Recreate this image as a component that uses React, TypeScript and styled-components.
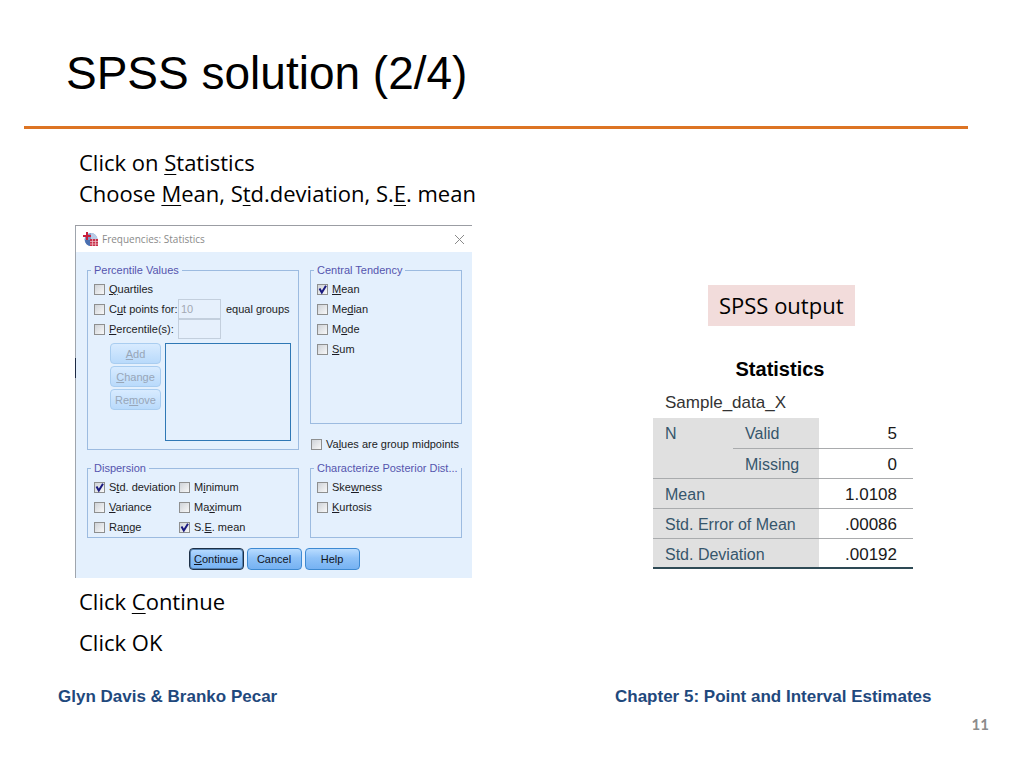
import React from "react";
import styled, { createGlobalStyle } from "styled-components";

const GlobalStyle = createGlobalStyle`
  *, *::before, *::after { box-sizing: border-box; }
  body {
    margin: 0;
    background: #fff;
    color: #000;
    font-family: "Liberation Sans", Arial, sans-serif;
  }
  u { text-decoration-thickness: 1px; }
`;

const Slide = styled.main`
  min-height: 100vh;
  display: flex;
  flex-direction: column;
`;

const Title = styled.h1`
  margin: 0 56px 0 24px;
  padding: 47px 42px 26px;
  font-size: 46px;
  line-height: 53px;
  font-weight: 400;
  border-bottom: 3px solid #dd7423;
`;

const Columns = styled.div`
  display: grid;
  grid-template-columns: minmax(0, 548fr) minmax(0, 476fr);
  padding-top: 18px;
`;

const Steps = styled.section`
  padding-left: 75px;
`;

const Step = styled.p`
  margin: 0;
  padding-left: 4px;
  font-family: "Open Sans", "Noto Sans", Calibri, sans-serif;
  font-size: 22px;
  line-height: 31px;
  u { text-underline-offset: 3px; }
`;

const AfterSteps = styled.div`
  padding-top: 8px;
  display: flex;
  flex-direction: column;
  gap: 10px;
`;

const Dialog = styled.section`
  width: 397px;
  margin-top: 16px;
  padding-left: 1px;
  border-top: 1px solid #9b9da3;
  background:
    linear-gradient(#9fa5ad 132px, #1d2a44 132px, #1d2a44 152px, #9fa5ad 152px)
      left / 1px 100% no-repeat,
    #e4f0fd;
  font-size: 11px;
  line-height: 14px;
  color: #1c1c24;
`;

const TitleBar = styled.header`
  display: flex;
  align-items: center;
  height: 26px;
  padding: 0 7px;
  gap: 4px;
  background: #fff;
  color: #8a8a8a;
`;

const DialogTitle = styled.h2`
  flex: 1;
  margin: 0;
  font-family: "Open Sans", "Noto Sans", sans-serif;
  font-size: 10px;
  font-weight: 400;
`;

const CloseButton = styled.button`
  display: flex;
  padding: 0;
  border: 0;
  background: none;
  color: #8a8a8a;
`;

const Panels = styled.div`
  display: grid;
  grid-template-columns: 212px 152px;
  column-gap: 11px;
  padding: 11px 10px 0 11px;
`;

const PanelColumn = styled.div`
  display: flex;
  flex-direction: column;
`;

const Group = styled.fieldset<{ $height: number }>`
  display: flex;
  flex-direction: column;
  height: ${(p) => p.$height}px;
  min-width: 0;
  margin: 0;
  padding: 2px 5px 0 6px;
  border: 1px solid #9cbbe0;
`;

const LowerGroup = styled(Group)`
  margin-top: 11px;
`;

const Legend = styled.legend`
  margin-left: -3px;
  padding: 0 3px;
  color: #5555ae;
  white-space: nowrap;
`;

const Row = styled.div`
  display: flex;
  align-items: center;
  height: 20px;
`;

const CheckLabel = styled.label<{ $width?: number }>`
  display: flex;
  align-items: center;
  gap: 4px;
  height: 20px;
  width: ${(p) => (p.$width ? `${p.$width}px` : "auto")};
  white-space: nowrap;
`;

const Box = styled.input`
  appearance: none;
  flex: none;
  width: 11px;
  height: 11px;
  margin: 0;
  border: 1px solid #8e8f8f;
  background: linear-gradient(135deg, #cfd3d8, #f8f8f8);
`;

const BoxWrap = styled.span`
  display: grid;
  flex: none;
  > * { grid-area: 1 / 1; }
  svg { pointer-events: none; }
`;

const Field = styled.input`
  width: 43px;
  height: 20px;
  margin: 0;
  padding: 0 2px;
  border: 1px solid #c3cfdd;
  background: #e6f0fc;
  color: #a3a9b3;
  font: inherit;
`;

const EqualGroups = styled.span`
  margin-left: 5px;
  white-space: nowrap;
`;

const Midpoints = styled.div`
  padding: 10px 0 7px 1px;
`;

const ListArea = styled.div`
  display: flex;
  gap: 4px;
  padding: 4px 2px 0 16px;
`;

const ButtonStack = styled.div`
  display: flex;
  flex-direction: column;
  gap: 2px;
`;

const PushButton = styled.button<{ $primary?: boolean }>`
  width: ${(p) => (p.disabled ? 51 : 55)}px;
  height: ${(p) => (p.disabled ? 21 : 22)}px;
  padding: 0;
  border: 1px solid ${(p) => (p.disabled ? "#a9cdf0" : p.$primary ? "#1d3047" : "#3e8ad2")};
  border-radius: 4px;
  box-shadow: ${(p) => (p.$primary ? "inset 0 0 0 1px #5481b0" : "none")};
  background: ${(p) =>
    p.disabled
      ? "linear-gradient(#d8ebff, #b9dafb)"
      : "linear-gradient(#b9dcff, #8fc2f8 45%, #76b2f2)"};
  color: ${(p) => (p.disabled ? "#98a6b8" : "#10141c")};
  font: inherit;
`;

const ListBox = styled.select`
  appearance: none;
  flex: 1;
  height: 98px;
  margin: 0;
  border: 1px solid #2f78b5;
  border-radius: 0;
  background: #e4f0fd;
`;

const Actions = styled.footer`
  display: flex;
  justify-content: center;
  gap: 3px;
  padding: 10px 0 8px;
`;

const Output = styled.section`
  display: flex;
  flex-direction: column;
  align-items: flex-start;
  padding: 138px 0 0 105px;
`;

const OutputTag = styled.p`
  margin: 0 0 0 55px;
  padding: 5px 11px;
  background: #f2dcdb;
  font-family: "Open Sans", "Noto Sans", Calibri, sans-serif;
  font-size: 22px;
  line-height: 31px;
`;

const StatsTable = styled.table`
  width: 260px;
  margin-top: 28px;
  border-collapse: collapse;
  table-layout: fixed;
`;

const StatsCaption = styled.caption`
  text-align: center;
  font-size: 17px;
  line-height: 30px;
  color: #333;
  strong {
    display: block;
    margin-left: -6px;
    color: #000;
    font-size: 20px;
    line-height: 30px;
  }
  span {
    display: block;
    padding: 4px 0 0 12px;
    text-align: left;
  }
`;

const StatsRow = styled.tr`
  height: 30px;
  &:last-child > * { border-bottom: 2px solid #2e4a55; }
`;

const HeadCell = styled.th`
  padding: 7px 0 0 12px;
  border-bottom: 1px solid #a9abad;
  background: #e0e0e0;
  color: #36566c;
  font-size: 16px;
  line-height: 18px;
  font-weight: 400;
  text-align: left;
  vertical-align: top;
`;

const ValueCell = styled.td`
  padding: 7px 16px 0 0;
  border-bottom: 1px solid #a9abad;
  color: #1a1a1a;
  font-size: 17px;
  line-height: 18px;
  text-align: right;
  vertical-align: top;
`;

const SlideFooter = styled.footer`
  display: grid;
  grid-template-columns: minmax(0, 557fr) minmax(0, 409fr);
  padding: 27px 0 0 58px;
  color: #1f497d;
  font-size: 17px;
  line-height: 24px;
  font-weight: 700;
`;

const PageNumber = styled.p`
  margin: 0;
  padding: 3px 35px 0 0;
  text-align: right;
  color: #8c8c8c;
  font-family: Lato, Carlito, Calibri, sans-serif;
  font-size: 15px;
  line-height: 24px;
  font-weight: 700;
`;

function Check({ children, checked, width }: { children: React.ReactNode; checked?: boolean; width?: number }) {
  return (
    <CheckLabel $width={width}>
      <BoxWrap>
        <Box type="checkbox" defaultChecked={checked} />
        {checked && (
          <svg width="11" height="11" viewBox="0 0 11 11" aria-hidden="true">
            <path d="M2.500 4.500 L4.800 8.500 L9 1.800" fill="none" stroke="#1a1a80" strokeWidth="2" />
          </svg>
        )}
      </BoxWrap>
      <span>{children}</span>
    </CheckLabel>
  );
}

function AppIcon() {
  return (
    <svg width="15" height="15" viewBox="0 0 15 15" aria-hidden="true">
      <circle cx="8" cy="7.500" r="6.500" fill="#7d9bcb" />
      <path d="M8 1a6.500 6.500 0 0 1 6.500 6.500H8z" fill="#b9cbe6" />
      <path d="M2 8a6.500 6.500 0 0 0 5 6V8z" fill="#4a6fb0" />
      <path d="M4 0v8M0 4h8" stroke="#c8203c" strokeWidth="2" />
      <rect x="7" y="7" width="8" height="7" fill="#c8304a" />
      <path d="M7 9.500h8M7 12h8M9.500 7v7M12.500 7v7" stroke="#f0c4cc" strokeWidth="0.7" />
    </svg>
  );
}

export default function App() {
  return (
    <>
      <GlobalStyle />
      <Slide>
        <Title>SPSS solution (2/4)</Title>
        <Columns>
          <Steps>
            <Step>Click on <u>S</u>tatistics</Step>
            <Step>Choose <u>M</u>ean, S<u>t</u>d.deviation, S.<u>E</u>. mean</Step>
            <Dialog aria-label="Frequencies: Statistics">
              <TitleBar>
                <AppIcon />
                <DialogTitle>Frequencies: Statistics</DialogTitle>
                <CloseButton aria-label="Close">
                  <svg width="11" height="11" viewBox="0 0 11 11" aria-hidden="true">
                    <path d="M1 1 L10 10 M10 1 L1 10" stroke="currentColor" />
                  </svg>
                </CloseButton>
              </TitleBar>
              <Panels>
                <PanelColumn>
                  <Group $height={187}>
                    <Legend>Percentile Values</Legend>
                    <Row><Check><u>Q</u>uartiles</Check></Row>
                    <Row>
                      <Check width={84}>C<u>u</u>t points for:</Check>
                      <Field aria-label="Number of equal groups" defaultValue="10" disabled />
                      <EqualGroups>equal groups</EqualGroups>
                    </Row>
                    <Row>
                      <Check width={84}><u>P</u>ercentile(s):</Check>
                      <Field aria-label="Percentile" disabled />
                    </Row>
                    <ListArea>
                      <ButtonStack>
                        <PushButton disabled><u>A</u>dd</PushButton>
                        <PushButton disabled><u>C</u>hange</PushButton>
                        <PushButton disabled>Re<u>m</u>ove</PushButton>
                      </ButtonStack>
                      <ListBox size={5} aria-label="Percentile list" />
                    </ListArea>
                  </Group>
                  <LowerGroup $height={77}>
                    <Legend>Dispersion</Legend>
                    <Row>
                      <Check checked width={85}>S<u>t</u>d. deviation</Check>
                      <Check>M<u>i</u>nimum</Check>
                    </Row>
                    <Row>
                      <Check width={85}><u>V</u>ariance</Check>
                      <Check>Ma<u>x</u>imum</Check>
                    </Row>
                    <Row>
                      <Check width={85}>Ra<u>n</u>ge</Check>
                      <Check checked>S.<u>E</u>. mean</Check>
                    </Row>
                  </LowerGroup>
                </PanelColumn>
                <PanelColumn>
                  <Group $height={161}>
                    <Legend>Central Tendency</Legend>
                    <Row><Check checked><u>M</u>ean</Check></Row>
                    <Row><Check>Me<u>d</u>ian</Check></Row>
                    <Row><Check>M<u>o</u>de</Check></Row>
                    <Row><Check><u>S</u>um</Check></Row>
                  </Group>
                  <Midpoints>
                    <Check>Va<u>l</u>ues are group midpoints</Check>
                  </Midpoints>
                  <Group $height={77}>
                    <Legend>Characterize Posterior Dist...</Legend>
                    <Row><Check>Ske<u>w</u>ness</Check></Row>
                    <Row><Check><u>K</u>urtosis</Check></Row>
                  </Group>
                </PanelColumn>
              </Panels>
              <Actions>
                <PushButton $primary><u>C</u>ontinue</PushButton>
                <PushButton>Cancel</PushButton>
                <PushButton>Help</PushButton>
              </Actions>
            </Dialog>
            <AfterSteps>
              <Step>Click <u>C</u>ontinue</Step>
              <Step>Click OK</Step>
            </AfterSteps>
          </Steps>
          <Output>
            <OutputTag>SPSS output</OutputTag>
            <StatsTable>
              <StatsCaption>
                <strong>Statistics</strong>
                <span>Sample_data_X</span>
              </StatsCaption>
              <colgroup>
                <col width="80" />
                <col width="86" />
                <col width="94" />
              </colgroup>
              <tbody>
                <StatsRow>
                  <HeadCell scope="rowgroup" rowSpan={2}>N</HeadCell>
                  <HeadCell scope="row">Valid</HeadCell>
                  <ValueCell>5</ValueCell>
                </StatsRow>
                <StatsRow>
                  <HeadCell scope="row">Missing</HeadCell>
                  <ValueCell>0</ValueCell>
                </StatsRow>
                <StatsRow>
                  <HeadCell scope="row" colSpan={2}>Mean</HeadCell>
                  <ValueCell>1.0108</ValueCell>
                </StatsRow>
                <StatsRow>
                  <HeadCell scope="row" colSpan={2}>Std. Error of Mean</HeadCell>
                  <ValueCell>.00086</ValueCell>
                </StatsRow>
                <StatsRow>
                  <HeadCell scope="row" colSpan={2}>Std. Deviation</HeadCell>
                  <ValueCell>.00192</ValueCell>
                </StatsRow>
              </tbody>
            </StatsTable>
          </Output>
        </Columns>
        <SlideFooter>
          <span>Glyn Davis &amp; Branko Pecar</span>
          <span>Chapter 5: Point and Interval Estimates</span>
        </SlideFooter>
        <PageNumber>11</PageNumber>
      </Slide>
    </>
  );
}
